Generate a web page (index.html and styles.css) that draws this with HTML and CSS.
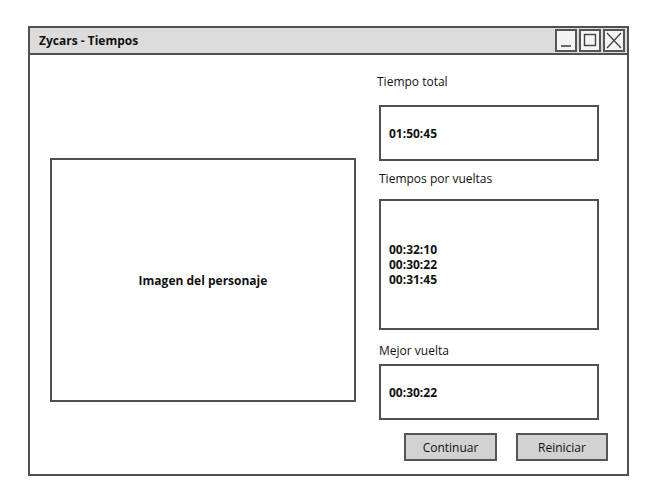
FILE: index.html
```html
<!DOCTYPE html>
<html lang="es">
<head>
<meta charset="utf-8">
<title>Zycars - Tiempos</title>
<link rel="stylesheet" href="styles.css">
</head>
<body>
<div class="window">
  <div class="titlebar">
    <span class="title">Zycars - Tiempos</span>
    <div class="controls">
      <span class="ctl"><svg width="18" height="19" viewBox="0 0 18 19"><line x1="4" y1="15" x2="14" y2="15" stroke="#444" stroke-width="1.6"/></svg></span>
      <span class="ctl"><svg width="18" height="19" viewBox="0 0 18 19"><rect x="3.5" y="3.5" width="11" height="11" fill="none" stroke="#444" stroke-width="1.4"/></svg></span>
      <span class="ctl"><svg width="18" height="19" viewBox="0 0 18 19"><path d="M2 2 L16 17 M16 2 L2 17" stroke="#444" stroke-width="1.3" fill="none"/></svg></span>
    </div>
  </div>
  <div class="content">
    <div class="image-box">Imagen del personaje</div>
    <div class="side">
      <div class="label l1">Tiempo total</div>
      <div class="field f1"><span>01:50:45</span></div>
      <div class="label l2">Tiempos por vueltas</div>
      <div class="field f2"><div class="lines"><div>00:32:10</div><div>00:30:22</div><div>00:31:45</div></div></div>
      <div class="label l3">Mejor vuelta</div>
      <div class="field f3"><span>00:30:22</span></div>
      <div class="buttons">
        <button class="btn b1">Continuar</button>
        <button class="btn b2">Reiniciar</button>
      </div>
    </div>
  </div>
</div>
</body>
</html>
```
FILE: styles.css
```css
* { box-sizing: border-box; }
html, body { margin: 0; padding: 0; background: #fff; }
body {
  font-family: "Open Sans", "Noto Sans", sans-serif;
  font-size: 12px;
  color: #111;
}
.window {
  margin: 26px 0 0 28px;
  width: 601px;
  height: 450px;
  border: 2px solid #505050;
  display: flex;
  flex-direction: column;
}
.titlebar {
  height: 27px;
  background: #dcdcdc;
  border-bottom: 2px solid #505050;
  display: flex;
  align-items: center;
  justify-content: space-between;
  padding: 0 2px 0 9px;
  flex: none;
}
.title { font-weight: 700; font-size: 12px; }
.controls { display: flex; gap: 2px; }
.ctl {
  width: 22px;
  height: 23px;
  border: 2px solid #555;
  background: #f4f4f4;
  display: flex;
  align-items: center;
  justify-content: center;
}
.ctl svg { display: block; }
.content {
  flex: 1;
  display: flex;
  padding-left: 20px;
}
.image-box {
  margin-top: 103px;
  width: 306px;
  height: 244px;
  border: 2px solid #505050;
  display: flex;
  align-items: center;
  justify-content: center;
  font-weight: 700;
  flex: none;
}
.side {
  margin-left: 23px;
  width: 220px;
  display: flex;
  flex-direction: column;
  flex: none;
}
.label { line-height: 16px; height: 16px; }
.l1 { margin-top: 19px; margin-left: -2px; }
.l2 { margin-top: 10px; }
.l3 { margin-top: 13px; }
.field {
  border: 2px solid #505050;
  display: flex;
  align-items: center;
  padding-left: 8px;
  font-weight: 700;
  line-height: 15px;
}
.lines div { height: 15px; }
.f1 { margin-top: 15px; height: 56px; }
.f2 { margin-top: 12px; height: 131px; }
.f3 { margin-top: 5px; height: 56px; }
.buttons {
  margin-top: 13px;
  display: flex;
  gap: 19px;
  padding-left: 25px;
}
.btn {
  font: inherit;
  color: #111;
  background: #d2d2d2;
  border: 2px solid #555;
  height: 28px;
  padding: 0;
  flex: none;
}
.b1 { width: 93px; }
.b2 { width: 92px; }
```
